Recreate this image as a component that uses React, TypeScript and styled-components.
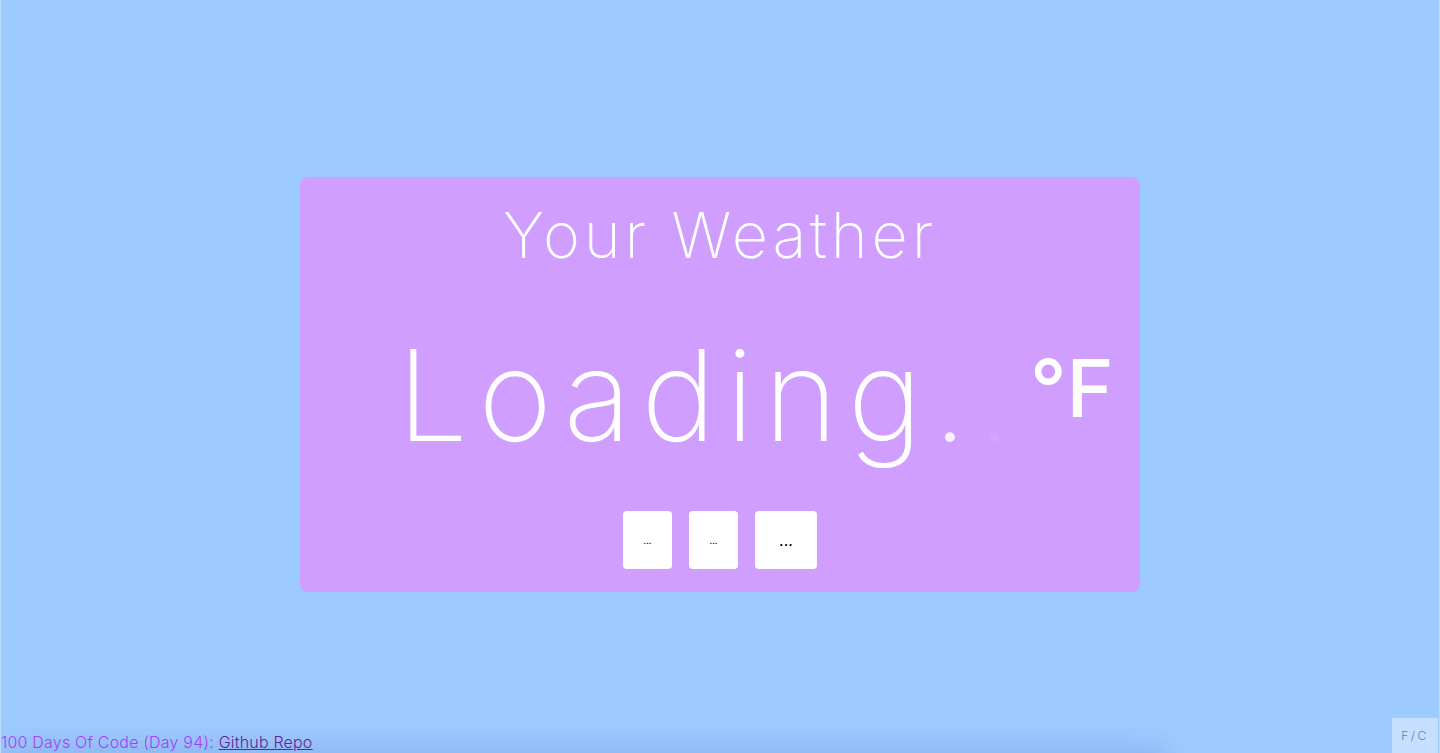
import React from "react";
import styled, { createGlobalStyle } from "styled-components";

const GlobalStyle = createGlobalStyle`
  html, body { margin: 0; padding: 0; }
  body {
    background: #9ecbff;
    font-family: "Inter", "Noto Sans", sans-serif;
  }
`;

const Page = styled.div`
  position: relative;
  height: 100vh;
  box-sizing: border-box;
  display: flex;
  flex-direction: column;
  overflow: hidden;
  border-left: 1px solid rgba(255, 255, 255, 0.3);
  border-right: 1px solid rgba(255, 255, 255, 0.3);
`;

const Main = styled.main`
  flex: 1;
  display: flex;
  justify-content: center;
  align-items: flex-start;
  padding-top: 177px;
`;

const Card = styled.section`
  width: 840px;
  height: 415px;
  box-sizing: border-box;
  background: #cf9eff;
  border-radius: 8px;
  display: flex;
  flex-direction: column;
  align-items: center;
  color: #fff;
`;

const Title = styled.h1`
  margin: 18px 0 0;
  font-size: 63px;
  font-weight: 200;
  line-height: 80px;
  letter-spacing: 3.8px;
`;

const TempRow = styled.div`
  display: flex;
  align-items: flex-start;
  justify-content: center;
  margin-top: 45px;
  height: 191px;
  padding-left: 71px;
`;

const Temp = styled.span`
  font-size: 126px;
  font-weight: 200;
  line-height: 150px;
  letter-spacing: 10px;
`;

const Dot = styled.span<{ $o: number }>`
  opacity: ${(p) => p.$o};
`;

const Unit = styled.span`
  font-size: 80px;
  font-weight: 500;
  line-height: 100px;
  margin-left: -37px;
  margin-top: 18px;
`;

const Buttons = styled.div`
  display: flex;
  gap: 17px;
`;

const Btn = styled.button<{ $w: number; $fs: number }>`
  width: ${(p) => p.$w}px;
  height: 58px;
  border: none;
  border-radius: 4px;
  background: #fff;
  color: #000;
  font-family: "Inter", sans-serif;
  font-size: ${(p) => p.$fs}px;
  padding: 0;
  display: flex;
  align-items: center;
  justify-content: center;
`;

const Footer = styled.footer`
  position: relative;
  width: 81%;
  height: 21px;
  font-size: 16px;
  font-weight: 300;
  line-height: 21px;
  letter-spacing: 0.2px;
  color: #b43cff;
  white-space: nowrap;
  &::after {
    content: "";
    position: absolute;
    left: 0;
    right: 0;
    top: 100%;
    height: 30px;
    box-shadow: 0 0 34px rgba(30, 50, 140, 0.22);
  }
`;

const Link = styled.a`
  color: #6c2196;
  text-decoration: underline;
`;

const Toggle = styled.button`
  position: absolute;
  right: 1px;
  bottom: 0;
  width: 46px;
  height: 35px;
  border: none;
  background: rgba(255, 255, 255, 0.4);
  color: #717d92;
  font-family: "Inter", sans-serif;
  font-size: 12px;
  font-weight: 300;
  letter-spacing: 2.5px;
  padding: 0;
`;

export default function App() {
  return (
    <>
      <GlobalStyle />
      <Page>
        <Main>
          <Card>
            <Title>Your Weather</Title>
            <TempRow>
              <Temp>
                Loading<Dot $o={0.85}>.</Dot>
                <Dot $o={0.08}>.</Dot>
                <Dot $o={0}>.</Dot>
              </Temp>
              <Unit>°F</Unit>
            </TempRow>
            <Buttons>
              <Btn $w={49} $fs={9}>...</Btn>
              <Btn $w={49} $fs={9}>...</Btn>
              <Btn $w={62} $fs={16}>...</Btn>
            </Buttons>
          </Card>
        </Main>
        <Footer>
          100 Days Of Code (Day 94): <Link href="#">Github Repo</Link>
        </Footer>
        <Toggle>F/C</Toggle>
      </Page>
    </>
  );
}
